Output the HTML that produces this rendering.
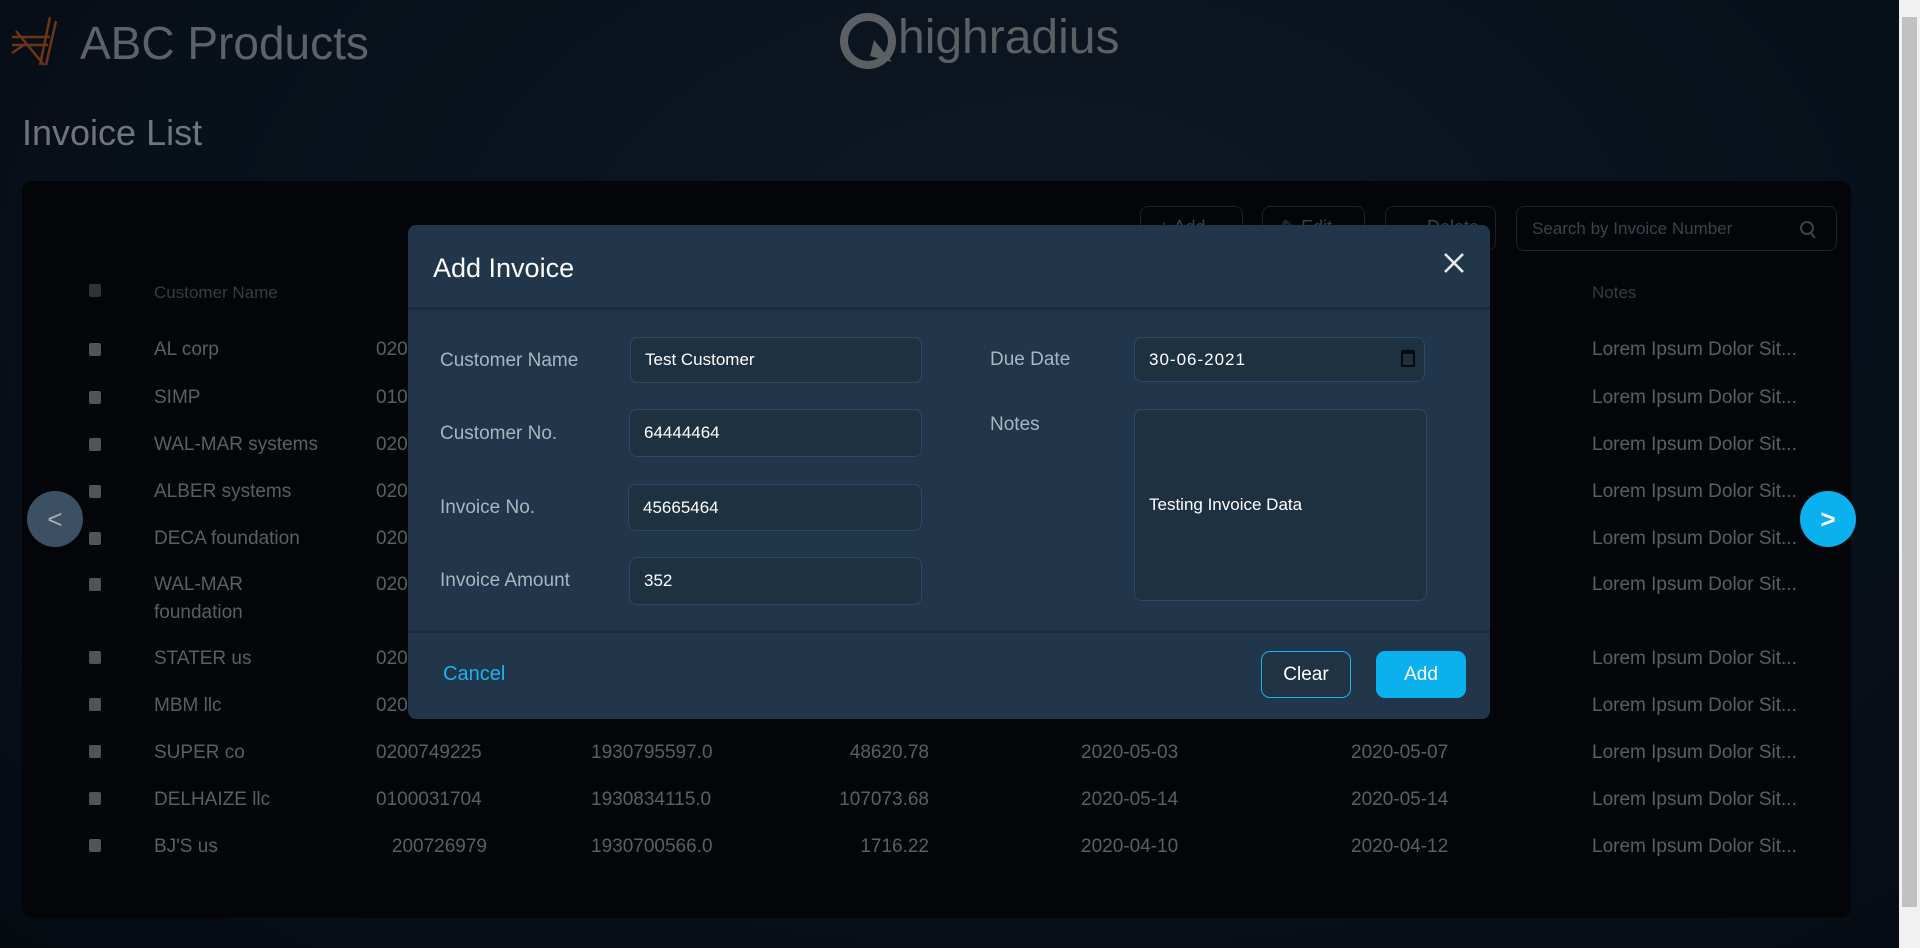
<!DOCTYPE html>
<html><head><meta charset="utf-8"><style>
*{box-sizing:border-box;margin:0;padding:0}
body{width:1920px;height:948px;overflow:hidden;background:#070d15;font-family:"Liberation Sans",sans-serif;position:relative}
.a{position:absolute;white-space:nowrap}
.bg{position:absolute;left:0;top:0;width:1899px;height:948px;background:radial-gradient(ellipse at 55% 30%,#0f1824 0%,#08101a 60%,#060b12 100%)}
.panel{position:absolute;left:22px;top:181px;width:1829px;height:737px;background:#030509;border-radius:10px}
.t{color:#5a5f64;font-size:19px}
.h{color:#363c43;font-size:17px}
.cb{position:absolute;width:12px;height:13px;background:#505458;border-radius:2px}
.tb{position:absolute;border:1px solid #1a222c;border-radius:8px;top:206px;height:45px;color:#3a4047;font-size:18px;padding:10px 0 0 18px}
.modal{position:absolute;left:408px;top:225px;width:1082px;height:494px;background:#21364a;border-radius:8px}
.lbl{color:#a9b5c0;font-size:19px}
.inp{position:absolute;background:#1e3141;border:1px solid #2c4a63;border-radius:8px;color:#fff;font-size:17px;padding-left:14px;display:flex;align-items:center}
.btn{position:absolute;top:651px;height:47px;width:90px;border-radius:9px;font-size:19px;display:flex;align-items:center;justify-content:center}
.sb{position:absolute;left:1899px;top:0;width:21px;height:948px;background:#f1f1f1}
</style></head><body>
<div class="bg"></div>
<svg class="a" style="left:10px;top:15px" width="50" height="52" viewBox="0 0 50 52"><g stroke="#6b3518" stroke-width="2.5" fill="none"><path d="M40 2 L30 50"/><path d="M46 6 L36 50"/><path d="M2 22 H40"/><path d="M2 30 H38"/><path d="M6 16 L34 50"/><path d="M2 38 L14 30"/></g></svg>
<div class="a" style="left:80px;top:16px;font-size:46px;color:#5e6266">ABC Products</div>
<svg class="a" style="left:840px;top:12px" width="60" height="58" viewBox="0 0 60 58"><circle cx="28" cy="29" r="24" fill="none" stroke="#5c6064" stroke-width="8"/><path d="M34 28 L52 50 L30 44 Z" fill="#5c6064"/></svg>
<div class="a" style="left:898px;top:10px;font-size:48px;color:#5c6064">highradius</div>
<div class="a" style="left:22px;top:112px;font-size:36px;color:#6d767f">Invoice List</div>
<div class="panel"></div>
<div class="tb" style="left:1140px;width:103px">+ Add</div>
<div class="tb" style="left:1262px;width:103px">✎ Edit</div>
<div class="tb" style="left:1385px;width:111px">— Delete</div>
<div class="tb" style="left:1516px;width:321px;padding:0"></div>
<div class="a" style="left:1532px;top:219px;font-size:17px;color:#3b424a">Search by Invoice Number</div>
<svg class="a" style="left:1799px;top:220px" width="18" height="20"><circle cx="8" cy="8" r="6" stroke="#3b424a" stroke-width="2" fill="none"/><path d="M12 13 L16 18" stroke="#3b424a" stroke-width="2"/></svg>
<div class="cb" style="left:89px;top:284px;background:#303336"></div>
<div class="a h" style="left:154px;top:283px">Customer Name</div>
<div class="a h" style="left:1592px;top:283px">Notes</div>
<div class="cb" style="left:89px;top:343px"></div><div class="a t" style="left:154px;top:339px">AL corp</div><div class="a t" style="left:376px;top:339px">020</div><div class="a t" style="left:1592px;top:339px">Lorem Ipsum Dolor Sit...</div>
<div class="cb" style="left:89px;top:391px"></div><div class="a t" style="left:154px;top:387px">SIMP</div><div class="a t" style="left:376px;top:387px">010</div><div class="a t" style="left:1592px;top:387px">Lorem Ipsum Dolor Sit...</div>
<div class="cb" style="left:89px;top:438px"></div><div class="a t" style="left:154px;top:434px">WAL-MAR systems</div><div class="a t" style="left:376px;top:434px">020</div><div class="a t" style="left:1592px;top:434px">Lorem Ipsum Dolor Sit...</div>
<div class="cb" style="left:89px;top:485px"></div><div class="a t" style="left:154px;top:481px">ALBER systems</div><div class="a t" style="left:376px;top:481px">020</div><div class="a t" style="left:1592px;top:481px">Lorem Ipsum Dolor Sit...</div>
<div class="cb" style="left:89px;top:532px"></div><div class="a t" style="left:154px;top:528px">DECA foundation</div><div class="a t" style="left:376px;top:528px">020</div><div class="a t" style="left:1592px;top:528px">Lorem Ipsum Dolor Sit...</div>
<div class="cb" style="left:89px;top:578px"></div><div class="a t" style="left:154px;top:574px">WAL-MAR</div><div class="a t" style="left:154px;top:602px">foundation</div><div class="a t" style="left:376px;top:574px">020</div><div class="a t" style="left:1592px;top:574px">Lorem Ipsum Dolor Sit...</div>
<div class="cb" style="left:89px;top:651px"></div><div class="a t" style="left:154px;top:648px">STATER us</div><div class="a t" style="left:376px;top:648px">020</div><div class="a t" style="left:1592px;top:648px">Lorem Ipsum Dolor Sit...</div>
<div class="cb" style="left:89px;top:698px"></div><div class="a t" style="left:154px;top:695px">MBM llc</div><div class="a t" style="left:376px;top:695px">020</div><div class="a t" style="left:1592px;top:695px">Lorem Ipsum Dolor Sit...</div>
<div class="cb" style="left:89px;top:745px"></div><div class="a t" style="left:154px;top:742px">SUPER co</div><div class="a t" style="left:376px;top:742px">0200749225</div><div class="a t" style="left:591px;top:742px">1930795597.0</div><div class="a t" style="left:800px;width:129px;text-align:right;top:742px">48620.78</div><div class="a t" style="left:1081px;top:742px">2020-05-03</div><div class="a t" style="left:1351px;top:742px">2020-05-07</div><div class="a t" style="left:1592px;top:742px">Lorem Ipsum Dolor Sit...</div>
<div class="cb" style="left:89px;top:792px"></div><div class="a t" style="left:154px;top:789px">DELHAIZE llc</div><div class="a t" style="left:376px;top:789px">0100031704</div><div class="a t" style="left:591px;top:789px">1930834115.0</div><div class="a t" style="left:800px;width:129px;text-align:right;top:789px">107073.68</div><div class="a t" style="left:1081px;top:789px">2020-05-14</div><div class="a t" style="left:1351px;top:789px">2020-05-14</div><div class="a t" style="left:1592px;top:789px">Lorem Ipsum Dolor Sit...</div>
<div class="cb" style="left:89px;top:839px"></div><div class="a t" style="left:154px;top:836px">BJ'S us</div><div class="a t" style="left:280px;width:207px;text-align:right;top:836px">200726979</div><div class="a t" style="left:591px;top:836px">1930700566.0</div><div class="a t" style="left:800px;width:129px;text-align:right;top:836px">1716.22</div><div class="a t" style="left:1081px;top:836px">2020-04-10</div><div class="a t" style="left:1351px;top:836px">2020-04-12</div><div class="a t" style="left:1592px;top:836px">Lorem Ipsum Dolor Sit...</div>
<div class="a" style="left:27px;top:491px;width:56px;height:56px;border-radius:50%;background:#3c5064;color:#aab;font-size:26px;display:flex;align-items:center;justify-content:center">&lt;</div>
<div class="a" style="left:1800px;top:491px;width:56px;height:56px;border-radius:50%;background:#0bb0ef;color:#fff;font-size:26px;font-weight:bold;display:flex;align-items:center;justify-content:center">&gt;</div>
<div class="modal">
 <div class="a" style="left:25px;top:28px;font-size:27px;color:#fff">Add Invoice</div>
 <svg class="a" style="left:1035px;top:27px" width="22" height="22"><path d="M2 2 L20 20 M20 2 L2 20" stroke="#e8ecef" stroke-width="2.6"/></svg>
 <div class="a" style="left:0;top:82px;width:1082px;height:3px;background:#1a2c3c"></div>
 <div class="a" style="left:0;top:405px;width:1082px;height:3px;background:#1a2c3c"></div>
</div>
<div class="a lbl" style="left:440px;top:350px">Customer Name</div>
<div class="a lbl" style="left:440px;top:423px">Customer No.</div>
<div class="a lbl" style="left:440px;top:497px">Invoice No.</div>
<div class="a lbl" style="left:440px;top:570px">Invoice Amount</div>
<div class="inp" style="left:630px;top:337px;width:292px;height:46px">Test Customer</div>
<div class="inp" style="left:629px;top:409px;width:293px;height:48px">64444464</div>
<div class="inp" style="left:628px;top:484px;width:294px;height:47px">45665464</div>
<div class="inp" style="left:629px;top:557px;width:293px;height:48px">352</div>
<div class="a lbl" style="left:990px;top:349px">Due Date</div>
<div class="a lbl" style="left:990px;top:414px">Notes</div>
<div class="inp" style="left:1134px;top:337px;width:291px;height:45px;letter-spacing:1px">30-06-2021</div>
<div class="a" style="left:1401px;top:350px;width:14px;height:17px;border:2px solid #0a0a0a;border-top-width:4px;border-radius:2px"></div>
<div class="inp" style="left:1134px;top:409px;width:293px;height:192px">Testing Invoice Data</div>
<div class="a" style="left:443px;top:663px;font-size:20px;color:#1ab3ef">Cancel</div>
<div class="btn" style="left:1261px;border:1px solid #1ab3ef;color:#fff;background:#1f3344">Clear</div>
<div class="btn" style="left:1376px;background:#0bb0ef;color:#fff">Add</div>
<div class="sb"><div style="position:absolute;left:3px;top:17px;width:15px;height:890px;background:#c1c1c1"></div></div>
</body></html>
